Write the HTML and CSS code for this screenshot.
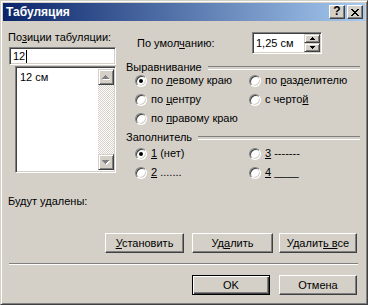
FILE: index.html
```html
<!DOCTYPE html>
<html lang="ru">
<head>
    <meta charset="UTF-8">
    <title>Табуляция</title>
    <link rel="stylesheet" href="styles.css">
</head>
<body>
    <div class="window">
        <div class="titlebar">
            <span class="title">Табуляция</span>
            <div class="caption-buttons">
                <span class="cap-btn help">?</span>
                <span class="cap-btn">
                    <svg width="8" height="7" viewBox="0 0 8 7" shape-rendering="crispEdges">
                        <path d="M0 0h2v1H0zM6 0h2v1H6zM1 1h2v1H1zM5 1h2v1H5zM2 2h4v1H2zM3 3h2v1H3zM2 4h4v1H2zM1 5h2v1H1zM5 5h2v1H5zM0 6h2v1H0zM6 6h2v1H6z" fill="#000"/>
                    </svg>
                </span>
            </div>
        </div>

        <div class="main">
            <div class="left">
                <div class="field-label">По<u>з</u>иции табуляции:</div>
                <div class="edit"><span class="caret">12</span></div>
                <div class="listbox">
                    <div class="list-items">
                        <div>12 см</div>
                    </div>
                    <div class="scrollbar">
                        <span class="scroll-btn">
                            <svg width="12" height="12" viewBox="0 0 12 12" shape-rendering="crispEdges">
                                <path d="M6 5h1v1H6zM5 6h3v1H5zM4 7h5v1H4zM3 8h7v1H3z" fill="#fff"/>
                                <path d="M5 4h1v1H5zM4 5h3v1H4zM3 6h5v1H3zM2 7h7v1H2z" fill="#808080"/>
                            </svg>
                        </span>
                        <span class="scroll-track"></span>
                        <span class="scroll-btn">
                            <svg width="12" height="12" viewBox="0 0 12 12" shape-rendering="crispEdges">
                                <path d="M3 5h7v1H3zM4 6h5v1H4zM5 7h3v1H5zM6 8h1v1H6z" fill="#fff"/>
                                <path d="M2 4h7v1H2zM3 5h5v1H3zM4 6h3v1H4zM5 7h1v1H5z" fill="#808080"/>
                            </svg>
                        </span>
                    </div>
                </div>
                <div class="field-label removed">Будут удалены:</div>
            </div>

            <div class="right">
                <div class="default-row">
                    <span class="default-label">По умол<u>ч</u>анию:</span>
                    <div class="spin">
                        <span class="spin-value">1,25 см</span>
                        <div class="spin-buttons">
                            <span class="spin-btn">
                                <svg width="7" height="4" viewBox="0 0 7 4" shape-rendering="crispEdges">
                                    <path d="M3 0h1v1H3zM2 1h3v1H2zM1 2h5v1H1z" fill="#000"/>
                                </svg>
                            </span>
                            <span class="spin-btn">
                                <svg width="7" height="4" viewBox="0 0 7 4" shape-rendering="crispEdges">
                                    <path d="M1 0h5v1H1zM2 1h3v1H2zM3 2h1v1H3z" fill="#000"/>
                                </svg>
                            </span>
                        </div>
                    </div>
                </div>

                <div class="group">
                    <div class="group-title"><span>Выравнивание</span></div>
                    <div class="options">
                        <div class="radio checked"><span class="circle"></span><span>по <u>л</u>евому краю</span></div>
                        <div class="radio"><span class="circle"></span><span>по <u>р</u>азделителю</span></div>
                        <div class="radio"><span class="circle"></span><span>по <u>ц</u>ентру</span></div>
                        <div class="radio"><span class="circle"></span><span>с черто<u>й</u></span></div>
                        <div class="radio"><span class="circle"></span><span>по <u>п</u>равому краю</span></div>
                    </div>
                </div>

                <div class="group fill">
                    <div class="group-title"><span>Заполнитель</span></div>
                    <div class="options">
                        <div class="radio checked"><span class="circle"></span><span><u>1</u> (нет)</span></div>
                        <div class="radio"><span class="circle"></span><span><u>3</u> -------</span></div>
                        <div class="radio"><span class="circle"></span><span><u>2</u> .......</span></div>
                        <div class="radio"><span class="circle"></span><span><u>4</u> ____</span></div>
                    </div>
                </div>
            </div>
        </div>

        <div class="actions first">
            <button class="btn w79"><u>У</u>становить</button>
            <button class="btn w81">Уд<u>а</u>лить</button>
            <button class="btn w78">Удалит<u>ь в</u>се</button>
        </div>
        <div class="separator"></div>
        <div class="actions second">
            <button class="btn default w78">OK</button>
            <button class="btn w78">Отмена</button>
        </div>
    </div>
</body>
</html>
```

FILE: styles.css
```css
* {
    box-sizing: border-box;
}
body {
    margin: 0;
    font-family: "Liberation Sans", Arial, sans-serif;
    font-size: 11px;
    line-height: 13px;
    color: #000;
    background-color: #d4d0c8;
}
u {
    text-decoration: underline;
    text-underline-offset: 1px;
}

/* window frame */
.window {
    width: 368px;
    height: 305px;
    padding: 2px;
    background-color: #d4d0c8;
    border: 1px solid;
    border-color: #d4d0c8 #404040 #404040 #d4d0c8;
    box-shadow: inset 1px 1px #fff, inset -1px -1px #808080;
}
.titlebar {
    height: 18px;
    display: flex;
    align-items: center;
    justify-content: space-between;
    padding: 0 2px 0 3px;
    background: linear-gradient(to right, #0a246a, #a6caf0);
}
.title {
    color: #fff;
    font-weight: bold;
    font-size: 12px;
}
.caption-buttons {
    display: flex;
    gap: 2px;
}
.cap-btn {
    width: 16px;
    height: 14px;
    display: flex;
    align-items: center;
    justify-content: center;
    background-color: #d4d0c8;
    border: 1px solid;
    border-color: #fff #404040 #404040 #fff;
    box-shadow: inset -1px -1px #808080;
}
.cap-btn.help {
    font-weight: bold;
    font-size: 12px;
    padding-bottom: 1px;
}

/* sunken fields */
.edit,
.listbox,
.spin {
    background-color: #fff;
    border: 1px solid;
    border-color: #808080 #fff #fff #808080;
    box-shadow: inset 1px 1px #404040, inset -1px -1px #d4d0c8;
}

.main {
    display: flex;
    gap: 10px;
    padding: 10px 5px 0 5px;
}
.left {
    width: 108px;
}
.right {
    width: 234px;
}
.field-label {
    height: 13px;
    white-space: nowrap;
}
.edit {
    width: 107px;
    height: 18px;
    margin: 3px 0 0 1px;
    padding: 2px 0 0 3px;
}
.caret {
    display: inline-block;
    height: 13px;
    padding-right: 1px;
    border-right: 1px solid #000;
}
.listbox {
    width: 101px;
    height: 107px;
    margin: 1px 0 0 7px;
    padding: 2px 1px 2px 2px;
    display: flex;
}
.list-items {
    flex: 1;
    padding: 2px 0 0 2px;
}
.scrollbar {
    width: 16px;
    display: flex;
    flex-direction: column;
}
.scroll-btn {
    width: 16px;
    height: 16px;
    display: flex;
    align-items: center;
    justify-content: center;
    background-color: #d4d0c8;
    border: 1px solid;
    border-color: #d4d0c8 #404040 #404040 #d4d0c8;
    box-shadow: inset 1px 1px #fff, inset -1px -1px #808080;
}
.scroll-track {
    flex: 1;
    background: repeating-conic-gradient(#d4d0c8 0 25%, #fff 0 50%) 0 0 / 2px 2px;
}
.removed {
    margin-top: 22px;
}

/* default tab stop */
.default-row {
    display: flex;
    align-items: center;
    height: 22px;
    margin-top: 1px;
}
.default-label {
    width: 126px;
    padding-left: 11px;
}
.spin {
    width: 70px;
    height: 22px;
    display: flex;
    align-items: center;
    padding: 2px 1px 2px 3px;
}
.spin-value {
    flex: 1;
}
.spin-buttons {
    width: 16px;
    height: 18px;
    display: flex;
    flex-direction: column;
}
.spin-btn {
    height: 9px;
    display: flex;
    align-items: center;
    justify-content: center;
    background-color: #d4d0c8;
    border: 1px solid;
    border-color: #d4d0c8 #404040 #404040 #d4d0c8;
    box-shadow: inset 1px 1px #fff, inset -1px -1px #808080;
}

/* groups */
.group {
    margin-top: 7px;
}
.group.fill {
    margin-top: 6px;
}
.group-title {
    display: flex;
    align-items: center;
    height: 13px;
}
.group-title::after {
    content: "";
    flex: 1;
    height: 2px;
    margin-left: 6px;
    border-top: 1px solid #808080;
    border-bottom: 1px solid #fff;
}
.options {
    display: grid;
    grid-template-columns: 114px 1fr;
    row-gap: 6px;
    padding-left: 9px;
}
.fill .options {
    margin-top: 3px;
}
.radio {
    display: flex;
    align-items: center;
    gap: 4px;
    height: 13px;
    white-space: nowrap;
}
.circle {
    width: 12px;
    height: 12px;
    flex: none;
    position: relative;
    border-radius: 50%;
    background-color: #fff;
    border: 1px solid;
    border-color: #808080 #fff #fff #808080;
    box-shadow: inset 1px 1px #404040, inset -1px -1px #d4d0c8;
}
.checked .circle::after {
    content: "";
    position: absolute;
    left: 3px;
    top: 3px;
    width: 4px;
    height: 4px;
    border-radius: 50%;
    background-color: #000;
}

/* buttons */
.actions {
    display: flex;
    justify-content: flex-end;
    padding-right: 8px;
}
.actions.first {
    margin-top: 25px;
}
.actions.first .btn + .btn {
    margin-left: 8px;
}
.actions.first .btn.w78 {
    margin-left: 6px;
}
.actions.second {
    margin-top: 10px;
    gap: 9px;
}
.btn {
    height: 20px;
    padding: 0;
    font: inherit;
    color: #000;
    background-color: #d4d0c8;
    border: 1px solid;
    border-color: #fff #404040 #404040 #fff;
    box-shadow: inset -1px -1px #808080;
}
.btn.default {
    border-color: #000;
    box-shadow: inset 1px 1px #fff, inset -1px -1px #404040, inset -2px -2px #808080;
}
.w78 { width: 78px; }
.w79 { width: 79px; }
.w81 { width: 81px; }
.separator {
    height: 2px;
    margin: 10px 7px 0 6px;
    border-top: 1px solid #808080;
    border-bottom: 1px solid #fff;
}
```
